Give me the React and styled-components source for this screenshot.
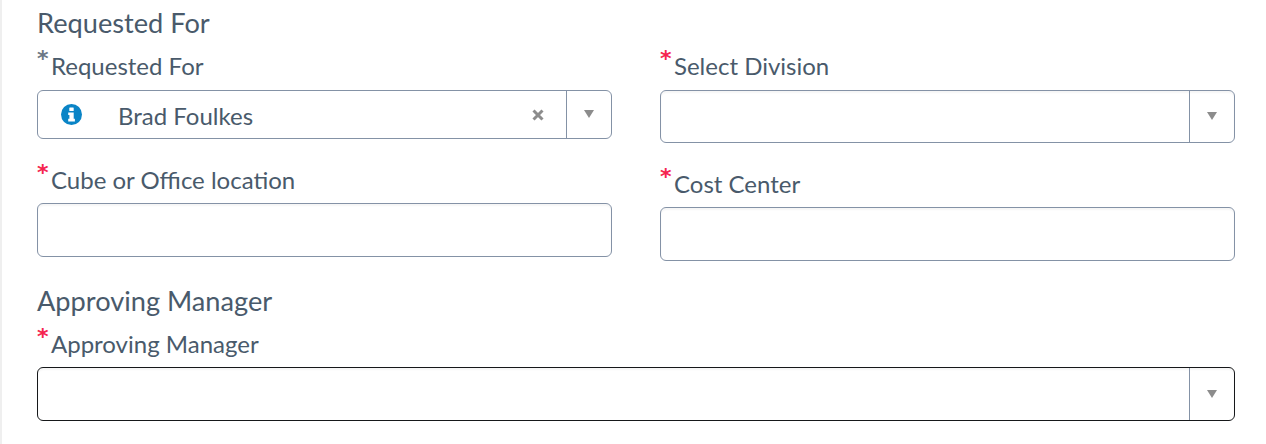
import React from 'react';
import styled, { createGlobalStyle } from 'styled-components';

const GlobalStyle = createGlobalStyle`
  html, body {
    margin: 0;
    padding: 0;
    background: #fff;
    overflow: hidden;
  }
  body {
    font-family: Lato, "Open Sans", sans-serif;
    color: #495a6b;
  }
`;

const Page = styled.div`
  width: 1266px;
  height: 444px;
  box-sizing: border-box;
  border-left: 2px solid #efefef;
  padding: 7px 31px 0 35px;
`;

const Heading = styled.h2`
  margin: 0 0 12px;
  height: 32px;
  font-size: 27.2px;
  line-height: 32px;
  font-weight: 400;
  color: #495a6b;
`;

const Columns = styled.div`
  display: grid;
  grid-template-columns: 575px 575px;
  column-gap: 48px;
  margin-bottom: 24px;
`;

const Column = styled.div`
  display: flex;
  flex-direction: column;
  gap: 26px;
`;

const Field = styled.div`
  display: flex;
  flex-direction: column;
`;

const Label = styled.label`
  display: flex;
  height: 30px;
  margin-bottom: ${p => p.$gap || 8}px;
  font-size: 24px;
  line-height: 30px;
  color: #495a6b;
`;

const Star = styled.span`
  width: 14px;
  margin-top: -4px;
  font-family: "DejaVu Sans", sans-serif;
  font-size: 22px;
  line-height: 24px;
  font-weight: 700;
  color: ${p => (p.$muted ? '#6b7785' : '#f5254f')};
`;

const Box = styled.div`
  display: flex;
  align-items: stretch;
  box-sizing: border-box;
  height: ${p => p.$h}px;
  border: 1px solid ${p => (p.$focus ? '#16181a' : '#8492a6')};
  border-radius: 6px;
  background: #fff;
  box-shadow: ${p => (p.$plain ? 'none' : 'inset 0 2px 2px rgba(0, 0, 0, 0.04)')};
`;

const Value = styled.div`
  flex: 1;
  display: flex;
  align-items: center;
  padding-top: 2px;
  font-size: 24px;
  color: #495a6b;
`;

const InfoIcon = styled.svg`
  width: 21px;
  height: 21px;
  margin: -2px 36px 0 23px;
  flex: none;
`;

const Clear = styled.svg`
  width: 12px;
  height: 12px;
  margin-right: 22px;
  align-self: center;
  flex: none;
`;

const Arrow = styled.div`
  width: 44px;
  flex: none;
  display: flex;
  align-items: center;
  justify-content: center;
  border-left: 1px solid #8492a6;

  &::after {
    content: '';
    width: 0;
    height: 0;
    margin-top: -1px;
    border-left: 5px solid transparent;
    border-right: 5px solid transparent;
    border-top: 8px solid #8c8c8c;
  }
`;

export default function App() {
  return (
    <Page>
      <GlobalStyle />
      <Heading>Requested For</Heading>
      <Columns>
        <Column>
          <Field>
            <Label $gap={9}><Star $muted>*</Star>Requested For</Label>
            <Box $h={49} $plain>
              <Value>
                <InfoIcon viewBox="0 0 21 21">
                  <circle cx="10.5" cy="10.5" r="10.5" fill="#0a84c6" />
                  <rect x="8.3" y="3.4" width="4.4" height="3.6" rx="0.6" fill="#fff" />
                  <path d="M7.2 8.4h5.5v6.4h1.2v2.6H7.2v-2.6h1.2v-3.8H7.2z" fill="#fff" />
                </InfoIcon>
                Brad Foulkes
              </Value>
              <Clear viewBox="0 0 12 12">
                <path d="M1.5 1.5l9 9M10.5 1.5l-9 9" stroke="#8c8c8c" strokeWidth="3" />
              </Clear>
              <Arrow />
            </Box>
          </Field>
          <Field>
            <Label><Star>*</Star>Cube or Office location</Label>
            <Box $h={54} />
          </Field>
        </Column>
        <Column>
          <Field>
            <Label $gap={9}><Star>*</Star>Select Division</Label>
            <Box $h={53}>
              <Value />
              <Arrow />
            </Box>
          </Field>
          <Field>
            <Label><Star>*</Star>Cost Center</Label>
            <Box $h={54} />
          </Field>
        </Column>
      </Columns>
      <Heading>Approving Manager</Heading>
      <Field>
        <Label><Star>*</Star>Approving Manager</Label>
        <Box $h={54} $focus>
          <Value />
          <Arrow />
        </Box>
      </Field>
    </Page>
  );
}
